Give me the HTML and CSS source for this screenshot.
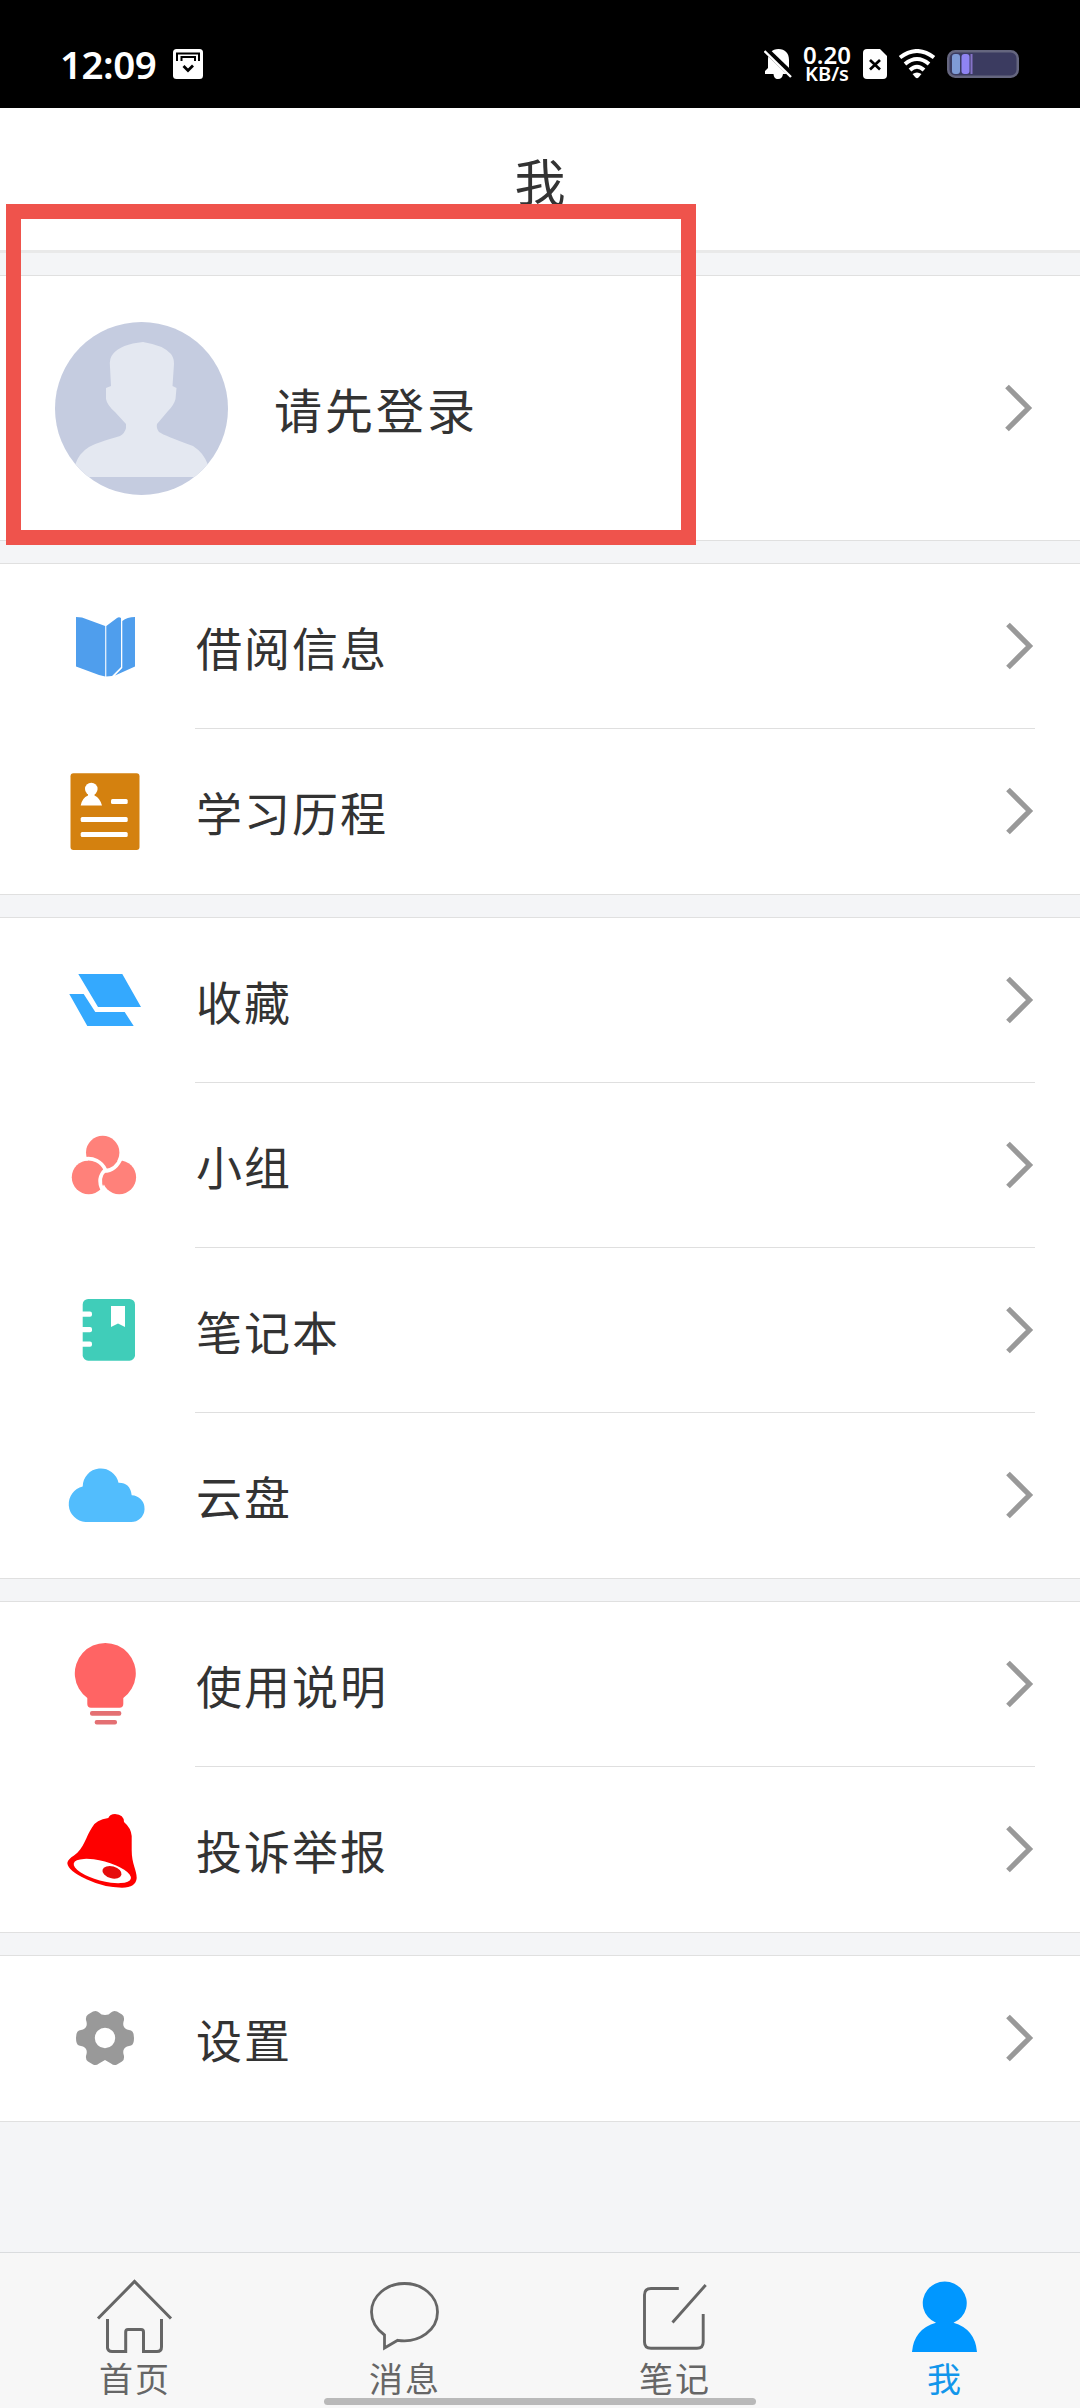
FILE: index.html
```html
<!DOCTYPE html>
<html lang="zh-CN">
<head>
<meta charset="utf-8">
<title>我</title>
<link rel="stylesheet" href="styles.css">
</head>
<body>
<svg width="0" height="0" class="defs">
  <symbol id="chevron" viewBox="0 0 28 48"><path d="M2 2.500L23.500 24L2 45.500" fill="none" stroke="#999" stroke-width="5.200"/></symbol>
</svg>
<div class="phone">
  <header class="status">
    <span class="clock">12:09</span>
    <svg class="s-archive" width="30" height="30" viewBox="0 0 30 30"><rect width="30" height="30" rx="3.500" fill="#fff"/><path d="M4 12V4.500H26V12M8.500 12V8H22V12" fill="none" stroke="#000" stroke-width="2"/><path d="M10.500 17L15 21.500L20 16.500" fill="none" stroke="#000" stroke-width="2.800"/></svg>
    <div class="status-right">
      <svg class="s-bell" width="28" height="31" viewBox="0 0 28 31"><path d="M1 25V22L4 19V11C4 4 8 0 14.500 0C21 0 25 4 25 11V19L27.500 23V25H19C18.500 28.500 17 30 14 30C11 30 10 28.500 9.500 25Z" fill="#fff"/><path d="M0 -1L29 27" stroke="#000" stroke-width="6"/><path d="M.5 2L27 28" stroke="#fff" stroke-width="2.400"/></svg>
      <div class="speed"><span class="speed-n">0.20</span><span class="speed-u">KB/s</span></div>
      <svg class="s-sim" width="24" height="30" viewBox="0 0 24 30"><path d="M4 0H17L24 7V26Q24 30 20 30H4Q0 30 0 26V4Q0 0 4 0Z" fill="#fff"/><path d="M7 11L17 20.500M17 11L7 20.500" stroke="#000" stroke-width="2.700"/></svg>
      <svg class="s-wifi" width="38" height="30" viewBox="0 0 38 30"><g fill="none" stroke="#fff" stroke-width="4"><path d="M2 8.500Q19 -4.500 36 8.500"/><path d="M7 15Q19 5 31 15"/><path d="M12 21Q19 14.500 26 21"/></g><path d="M14.500 25Q19 22 23.500 25L20.500 28.500Q19 30 17.500 28.500Z" fill="#fff"/></svg>
      <svg width="72" height="28" viewBox="0 0 72 28"><rect x="1.250" y="1.250" width="69.500" height="25.500" rx="7" fill="#3b3b60" stroke="#65667f" stroke-width="2.500"/><rect x="5" y="4" width="8" height="20" rx="3" fill="#7f9bd6"/><rect x="14.500" y="4" width="8" height="20" rx="3" fill="#8f84f2"/><rect x="23.500" y="4" width="2" height="20" fill="#8573c7"/></svg>
    </div>
  </header>
  <div class="titlebar"><h1>我</h1></div>
  <main>
    <section class="group profile">
      <svg class="avatar" width="173" height="173" viewBox="0 0 173 173">
        <defs><clipPath id="round"><circle cx="86.500" cy="86.500" r="86.500"/></clipPath></defs>
        <g clip-path="url(#round)"><rect width="173" height="173" fill="#c5cce0"/><path d="M56 64L55 45Q54 36 58 32Q66 22 88 20Q108 23 116 32Q119 36 119 42L117.500 64L121.500 66L120.500 77Q119 83 113 89L102 102Q101 106 104 110Q110 114 138 124Q149 131 153 143L150 155H22L20 143Q24 131 34 125Q41 121 65 114Q70 111 71 106V102L60 90Q52 83 51 77V66L56 64Z" fill="#e4e8f1"/></g>
      </svg>
      <span class="login">请先登录</span>
      <svg class="chev" width="28" height="48"><use href="#chevron"/></svg>
    </section>
    <section class="group">
      <div class="row"><svg class="icon" viewBox="0 0 90 90"><g fill="#4f9eed"><path d="M16 16L22 16.500L45.200 25V75.500L39 74L16 65.500Z"/><path d="M46.300 25L57 17Q59 15.500 61 17V66L52 75L46.300 75.500Z"/><path d="M62.300 20Q67 16 75 16V65.500L55 74.500L62.300 67Z"/></g></svg><div class="cell"><span>借阅信息</span><svg class="chev" width="28" height="48"><use href="#chevron"/></svg></div></div>
      <div class="row"><svg class="icon" viewBox="0 0 90 90"><rect x="10.500" y="7.300" width="69" height="76.700" rx="3" fill="#d4810f"/><g fill="#fff"><circle cx="31.300" cy="23" r="6.300"/><path d="M28 26H34.500V29.500Q40 32 42 39.500H20.700Q22 32 28 29.500Z"/><rect x="51" y="33" width="16.700" height="5" rx="1.500"/><rect x="20.700" y="51" width="47" height="5" rx="1.500"/><rect x="20.700" y="66" width="47" height="5" rx="1.500"/></g></svg><div class="cell"><span>学习历程</span><svg class="chev" width="28" height="48"><use href="#chevron"/></svg></div></div>
    </section>
    <section class="group">
      <div class="row"><svg class="icon" viewBox="0 0 90 90"><path d="M18.300 19H62.300L81 52H38ZM9.300 39H23.700L35.300 57H64.700L73.700 71H27.300Z" fill="#34a9fe"/></svg><div class="cell"><span>收藏</span><svg class="chev" width="28" height="48"><use href="#chevron"/></svg></div></div>
      <div class="row"><svg class="icon" viewBox="0 0 90 90"><g fill="#ff817a"><circle cx="42.700" cy="32.500" r="16.700"/><circle cx="28.700" cy="57.300" r="16.900"/><circle cx="59.200" cy="57.300" r="16.900"/></g><g fill="none" stroke="#fff" stroke-width="3.600"><path d="M24 39.100A18.800 18.800 0 0 1 45.500 50"/><path d="M44 51Q56 51 61.500 37"/><path d="M45.500 49.500Q36.500 58 42.500 70"/></g></svg><div class="cell"><span>小组</span><svg class="chev" width="28" height="48"><use href="#chevron"/></svg></div></div>
      <div class="row"><svg class="icon" viewBox="0 0 90 90"><rect x="22.700" y="14" width="52.300" height="61.700" rx="5.500" fill="#40cdb9"/><g fill="#fff"><rect x="18" y="26.500" width="14" height="5.300" rx="2"/><rect x="18" y="42" width="14" height="5.300" rx="2"/><rect x="18" y="56.500" width="14" height="5.300" rx="2"/><path d="M51 21H65V42L58 38.500L51 42Z"/></g></svg><div class="cell"><span>笔记本</span><svg class="chev" width="28" height="48"><use href="#chevron"/></svg></div></div>
      <div class="row"><svg class="icon" viewBox="0 0 90 90"><path d="M25.500 72A18 18 0 0 1 22.700 36.500A18.100 18.100 0 0 1 58.500 32.800Q70 32.500 71.700 45.200A13.400 13.400 0 0 1 70.600 72Z" fill="#52bdfd"/></svg><div class="cell"><span>云盘</span><svg class="chev" width="28" height="48"><use href="#chevron"/></svg></div></div>
    </section>
    <section class="group">
      <div class="row"><svg class="icon" viewBox="0 0 90 90"><path d="M27.300 59A30.500 30.500 0 1 1 63.300 59V65Q63.300 68.700 59.500 68.700H31Q27.300 68.700 27.300 65Z" fill="#ff6464"/><g fill="#e47073"><rect x="30" y="72" width="31.300" height="4.700" rx="2"/><rect x="34.700" y="81" width="22.300" height="4.400" rx="2"/></g></svg><div class="cell"><span>使用说明</span><svg class="chev" width="28" height="48"><use href="#chevron"/></svg></div></div>
      <div class="row"><svg class="icon" viewBox="0 0 90 90"><path d="M48.300 14Q50 10 55 10Q64 10.500 64 18Q71 24 71.700 32V46C71.700 60 76.700 66 76.700 74Q76 83.500 62 83.700Q44 83.500 27 75.500Q8 67 7.300 59Q8 55 14 51.500C24 45 26 32 32 23.500Q36 15.500 48.300 14Z" fill="#fe0000"/><ellipse cx="42.300" cy="67" rx="29.500" ry="9.800" transform="rotate(15 42.300 67)" fill="#fff"/><ellipse cx="52" cy="68.300" rx="9.800" ry="6" transform="rotate(15 52 68.300)" fill="#e60c0c"/></svg><div class="cell"><span>投诉举报</span><svg class="chev" width="28" height="48"><use href="#chevron"/></svg></div></div>
    </section>
    <section class="group">
      <div class="row"><svg class="icon" viewBox="0 0 90 90"><path fill-rule="evenodd" d="M45 22Q49 22 51 19.500Q53.500 17 57 18.500L62 21.500Q64.500 23 64 27Q61.500 34 67 36.500L71 37.500Q74 38.500 74 45Q74 51.500 71 52.500L67 53.500Q61.500 56 64 63Q64.500 67 62 68.500L57 71.500Q54 73 51 70.500L45 67L39 70.500Q36 73 33 71.500L28 68.500Q25.500 67 26 63Q28.500 56 23 53.500L19 52.500Q16 51.500 16 45Q16 38.500 19 37.500L23 36.500Q28.500 34 26 27Q25.500 23 28 21.500L33 18.500Q36.500 17 39 19.500Q41 22 45 22ZM45 34.800A10.200 10.200 0 1 0 45 55.200A10.200 10.200 0 1 0 45 34.800Z" fill="#999"/></svg><div class="cell"><span>设置</span><svg class="chev" width="28" height="48"><use href="#chevron"/></svg></div></div>
    </section>
  </main>
  <nav class="tabs">
    <div class="tab"><svg width="90" height="80" viewBox="0 0 90 80"><g fill="none" stroke="#666" stroke-width="3"><path d="M8 43.500L44.500 6.500L81 43.500"/><path d="M17.500 44V73Q18 76.500 22 76.500H35.700V57Q35.700 54.500 38 54.500H51Q53.500 54.500 53.500 57V76.500H67Q71.500 76.500 71.500 72V44"/></g></svg><span>首页</span></div>
    <div class="tab"><svg width="90" height="80" viewBox="0 0 90 80"><path d="M24.500 60V73L37.700 65.300C60 68.500 77.500 54.500 77.500 37C77.500 21 62.500 8.500 44.500 8.500C26.500 8.500 11.500 21 11.500 37Q11.500 50.500 24.500 60Z" fill="none" stroke="#666" stroke-width="2.800"/></svg><span>消息</span></div>
    <div class="tab"><svg width="90" height="80" viewBox="0 0 90 80"><path d="M48.800 13.500H21Q14.500 13.500 14.500 20V67Q14.500 73.300 21 73.300H67Q73.200 73.300 73.200 67V39M42.500 47.500L75.700 10" fill="none" stroke="#666" stroke-width="2.900"/></svg><span>笔记</span></div>
    <div class="tab active"><svg width="90" height="80" viewBox="0 0 90 80"><path d="M36 47.800A22 21.500 0 1 1 53.500 47.800Q75 54 77 77H12Q14 54 36 47.800Z" fill="#0097ff"/></svg><span>我</span></div>
  </nav>
  <div class="highlight"></div>
  <div class="home-indicator"></div>
</div>
</body>
</html>
```
FILE: styles.css
```css
* { box-sizing: border-box; }
body {
  margin: 0;
  font-family: "Noto Sans CJK SC", "Noto Sans", sans-serif;
  color: #333;
}
svg { display: block; flex: none; }
.defs { position: absolute; }
.phone {
  position: relative;
  display: flex;
  flex-direction: column;
  width: 1080px;
  height: 2408px;
  overflow: hidden;
  background: #f4f5f7;
}

.status {
  display: flex;
  align-items: center;
  height: 108px;
  padding: 20px 61px 0 60px;
  background: #000;
  color: #fff;
  font-family: "Noto Sans", sans-serif;
  font-weight: 600;
}
.clock { width: 113px; font-size: 38.5px; letter-spacing: -0.5px; line-height: 50px; }
.status-right { display: flex; align-items: center; margin-left: auto; }
.s-bell { margin-right: 9px; }
.speed {
  display: flex;
  flex-direction: column;
  align-items: center;
  width: 52px;
  margin-right: 10px;
  white-space: nowrap;
}
.speed-n { font-size: 24px; line-height: 19px; }
.speed-u { font-size: 20px; line-height: 19px; }
.s-sim { margin-right: 11px; }
.s-wifi { margin-right: 11px; }

.titlebar {
  display: flex;
  justify-content: center;
  height: 145px;
  border-bottom: 3px solid #e9e9e9;
  background: #fff;
}
h1 { margin: 0; padding-top: 35px; font-size: 51px; font-weight: 400; line-height: 75px; }

main { display: flex; flex-direction: column; gap: 22px; padding-top: 22px; }
.group { border-top: 1px solid #e0e0e0; border-bottom: 1px solid #e0e0e0; background: #fff; }
.profile { display: flex; align-items: center; height: 266px; padding: 0 46px 0 55px; }
.login { margin-left: 46px; font-size: 48px; letter-spacing: 3px; line-height: 70px; }
.chev { margin-right: 1px; }
.profile .chev { margin-left: auto; }
.row { display: flex; height: 165px; padding: 0 45px 0 60px; }
.icon { width: 90px; height: 90px; margin: 37px 45px 0 0; }
.cell {
  display: flex;
  flex: 1;
  align-items: center;
  justify-content: space-between;
  border-bottom: 1px solid #dfdfdf;
  font-size: 46px;
  letter-spacing: 2px;
  line-height: 68px;
}
.row:last-child .cell { border-bottom-color: transparent; }
.cell span { padding-left: 1px; padding-bottom: 1px; }

.tabs {
  display: flex;
  height: 156px;
  margin-top: auto;
  border-top: 1px solid #dadcde;
  background: #f7f7f7;
  color: #666;
}
.tab {
  display: flex;
  flex: 1;
  flex-direction: column;
  align-items: center;
  padding-top: 22px;
  font-size: 34px;
  letter-spacing: 2px;
  line-height: 46px;
}
.tab svg { margin-right: 1px; }
.tab.active { color: #1296eb; }

.highlight {
  position: absolute;
  left: 6px;
  top: 204px;
  width: 690px;
  height: 341px;
  border: 15px solid #ef534c;
}
.home-indicator {
  position: absolute;
  left: 324px;
  bottom: 3px;
  width: 432px;
  height: 7px;
  border-radius: 4px;
  background: #b9b9b9;
}
```
